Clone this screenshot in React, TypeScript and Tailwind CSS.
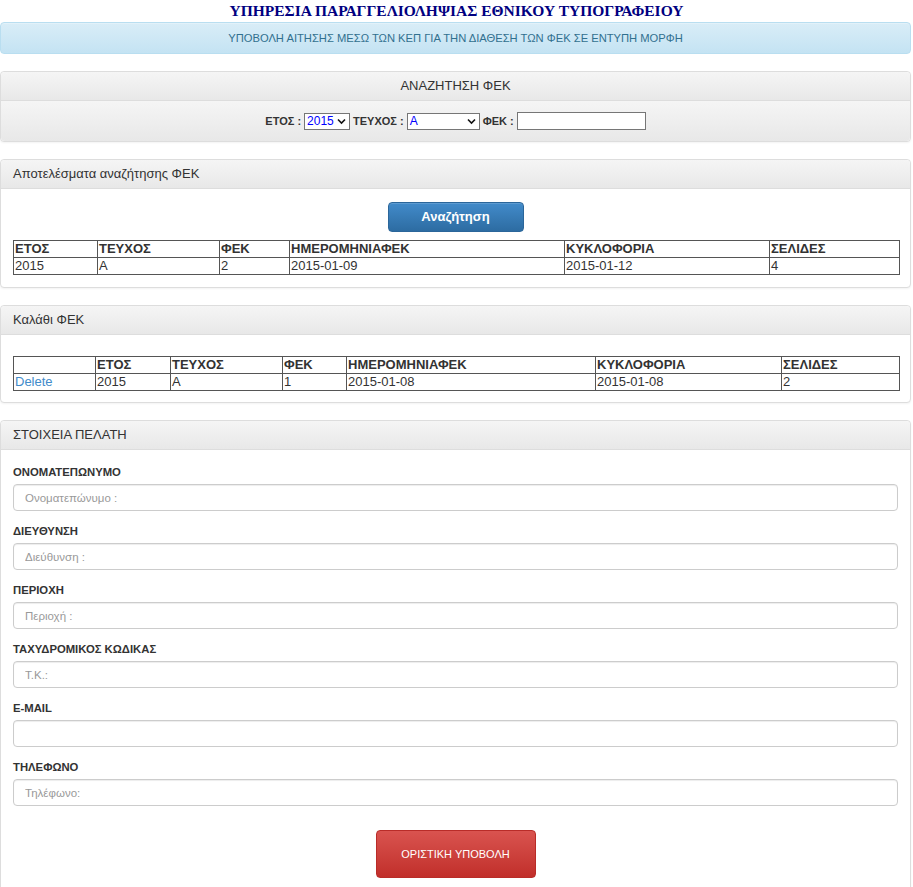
import React from 'react';

const sans = { fontFamily: '"Liberation Sans", Arial, sans-serif' };

const results = [{ year: '2015', issue: 'Α', fek: '2', date: '2015-01-09', release: '2015-01-12', pages: '4' }];
const basket = [{ year: '2015', issue: 'Α', fek: '1', date: '2015-01-08', release: '2015-01-08', pages: '2' }];

const fields = [
  { label: 'ΟΝΟΜΑΤΕΠΩΝΥΜΟ', placeholder: 'Ονοματεπώνυμο :' },
  { label: 'ΔΙΕΥΘΥΝΣΗ', placeholder: 'Διεύθυνση :' },
  { label: 'ΠΕΡΙΟΧΗ', placeholder: 'Περιοχή :' },
  { label: 'ΤΑΧΥΔΡΟΜΙΚΟΣ ΚΩΔΙΚΑΣ', placeholder: 'Τ.Κ.:' },
  { label: 'E-MAIL', placeholder: '' },
  { label: 'ΤΗΛΕΦΩΝΟ', placeholder: 'Τηλέφωνο:' },
];

function Panel({ title, center, children }: { title: string; center?: boolean; children: React.ReactNode }) {
  return (
    <div className="mb-[17px] mr-[2px] rounded-[4px] border border-[#ddd] bg-white shadow-[0_1px_2px_rgba(0,0,0,0.05)]">
      <div
        className={`flex h-[29px] items-center rounded-t-[4px] border-b border-[#ddd] bg-gradient-to-b from-[#f5f5f5] to-[#e8e8e8] px-[12px] text-[13px] text-[#333] ${center ? 'justify-center' : ''}`}
      >
        {title}
      </div>
      {children}
    </div>
  );
}

function Chevron() {
  return (
    <svg className="pointer-events-none absolute right-[3px] top-[4px]" width="9" height="7" viewBox="0 0 9 7">
      <path d="M1 1.5 L4.5 5 L8 1.5" fill="none" stroke="#111" strokeWidth="1.6" />
    </svg>
  );
}

function FakeSelect({ value, width }: { value: string; width: string }) {
  return (
    <div className={`relative h-[17px] ${width} border border-[#767676] bg-white`}>
      <div className="pl-[2px] text-[12px] font-normal leading-[15px] text-[#00f]">{value}</div>
      <Chevron />
    </div>
  );
}

function DataTable({ cols, widths, rows }: { cols: string[]; widths: number[]; rows: React.ReactNode[][] }) {
  return (
    <table className="w-full table-fixed border-collapse text-[13px] leading-[16px] text-[#333]">
      <colgroup>
        {widths.map((w, i) => (
          <col key={i} style={{ width: w }} />
        ))}
      </colgroup>
      <thead>
        <tr>
          {cols.map((c, i) => (
            <th key={i} className="border border-[#555] px-[1px] text-left font-bold">
              {c}
            </th>
          ))}
        </tr>
      </thead>
      <tbody>
        {rows.map((r, i) => (
          <tr key={i}>
            {r.map((c, j) => (
              <td key={j} className="border border-[#555] px-[1px]">
                {c}
              </td>
            ))}
          </tr>
        ))}
      </tbody>
    </table>
  );
}

export default function App() {
  return (
    <div className="min-h-screen bg-white" style={sans}>
      <h1
        className="pt-[2px] text-center text-[15.5px] font-bold leading-[18px] text-[#000080]"
        style={{ fontFamily: '"Liberation Serif", "Times New Roman", serif' }}
      >
        ΥΠΗΡΕΣΙΑ ΠΑΡΑΓΓΕΛΙΟΛΗΨΙΑΣ ΕΘΝΙΚΟΥ ΤΥΠΟΓΡΑΦΕΙΟΥ
      </h1>

      <div className="mb-[17px] mr-[2px] mt-[2px] flex h-[32px] items-center justify-center rounded-[4px] border border-[#b9def0] bg-gradient-to-b from-[#d9edf7] to-[#c4e3f3] text-[11.2px] text-[#31708f] shadow-[inset_0_1px_0_rgba(255,255,255,0.25)]">
        ΥΠΟΒΟΛΗ ΑΙΤΗΣΗΣ ΜΕΣΩ ΤΩΝ ΚΕΠ ΓΙΑ ΤΗΝ ΔΙΑΘΕΣΗ ΤΩΝ ΦΕΚ ΣΕ ΕΝΤΥΠΗ ΜΟΡΦΗ
      </div>

      {/* Search */}
      <Panel title="ΑΝΑΖΗΤΗΣΗ ΦΕΚ" center>
        <div className="flex h-[40px] items-center justify-center gap-[3px] rounded-b-[4px] bg-gradient-to-b from-[#f5f5f5] to-[#e8e8e8] text-[11px] font-bold text-[#333]">
          <span>ΕΤΟΣ :</span>
          <FakeSelect value="2015" width="w-[46px]" />
          <span>ΤΕΥΧΟΣ :</span>
          <FakeSelect value="Α" width="w-[73px]" />
          <span>ΦΕΚ :</span>
          <input className="h-[18px] w-[129px] border border-[#767676] bg-white outline-none" />
        </div>
      </Panel>

      {/* Results */}
      <Panel title="Αποτελέσματα αναζήτησης ΦΕΚ">
        <div className="px-[12px] pb-[12px] pt-[13px]">
          <div className="mb-[8px] flex justify-center">
            <button className="h-[30px] w-[136px] rounded-[4px] border border-[#2b669a] bg-gradient-to-b from-[#428bca] to-[#2d6ca2] text-[13px] font-bold text-white shadow-[inset_0_1px_0_rgba(255,255,255,0.15)]">
              Αναζήτηση
            </button>
          </div>
          <DataTable
            cols={['ΕΤΟΣ', 'ΤΕΥΧΟΣ', 'ΦΕΚ', 'ΗΜΕΡΟΜΗΝΙΑΦΕΚ', 'ΚΥΚΛΟΦΟΡΙΑ', 'ΣΕΛΙΔΕΣ']}
            widths={[84, 122, 70, 275, 205, 130]}
            rows={results.map((r) => [r.year, r.issue, r.fek, r.date, r.release, r.pages])}
          />
        </div>
      </Panel>

      {/* Basket */}
      <Panel title="Καλάθι ΦΕΚ">
        <div className="px-[12px] pb-[11px] pt-[21px]">
          <DataTable
            cols={['', 'ΕΤΟΣ', 'ΤΕΥΧΟΣ', 'ΦΕΚ', 'ΗΜΕΡΟΜΗΝΙΑΦΕΚ', 'ΚΥΚΛΟΦΟΡΙΑ', 'ΣΕΛΙΔΕΣ']}
            widths={[82, 75, 112, 64, 249, 186, 118]}
            rows={basket.map((r) => [
              <a key="d" href="#" className="text-[#428bca]">
                Delete
              </a>,
              r.year,
              r.issue,
              r.fek,
              r.date,
              r.release,
              r.pages,
            ])}
          />
        </div>
      </Panel>

      {/* Customer */}
      <Panel title="ΣΤΟΙΧΕΙΑ ΠΕΛΑΤΗ">
        <div className="px-[12px] pb-[12px] pt-[14px]">
          {fields.map((f) => (
            <div key={f.label} className="mb-[12px]">
              <div className="mb-[4px] text-[11.3px] font-bold leading-[16px] text-[#333]">{f.label}</div>
              <input
                placeholder={f.placeholder}
                className="h-[27px] w-full rounded-[4px] border border-[#ccc] px-[11px] text-[11.5px] text-[#555] shadow-[inset_0_1px_1px_rgba(0,0,0,0.075)] outline-none placeholder:text-[#999]"
              />
            </div>
          ))}
          <div className="flex justify-center pt-[12px]">
            <button className="h-[48px] w-[160px] rounded-[4px] border border-[#b92c28] bg-gradient-to-b from-[#d9534f] to-[#c12e2a] text-[11px] text-white">
              ΟΡΙΣΤΙΚΗ ΥΠΟΒΟΛΗ
            </button>
          </div>
        </div>
      </Panel>
    </div>
  );
}
